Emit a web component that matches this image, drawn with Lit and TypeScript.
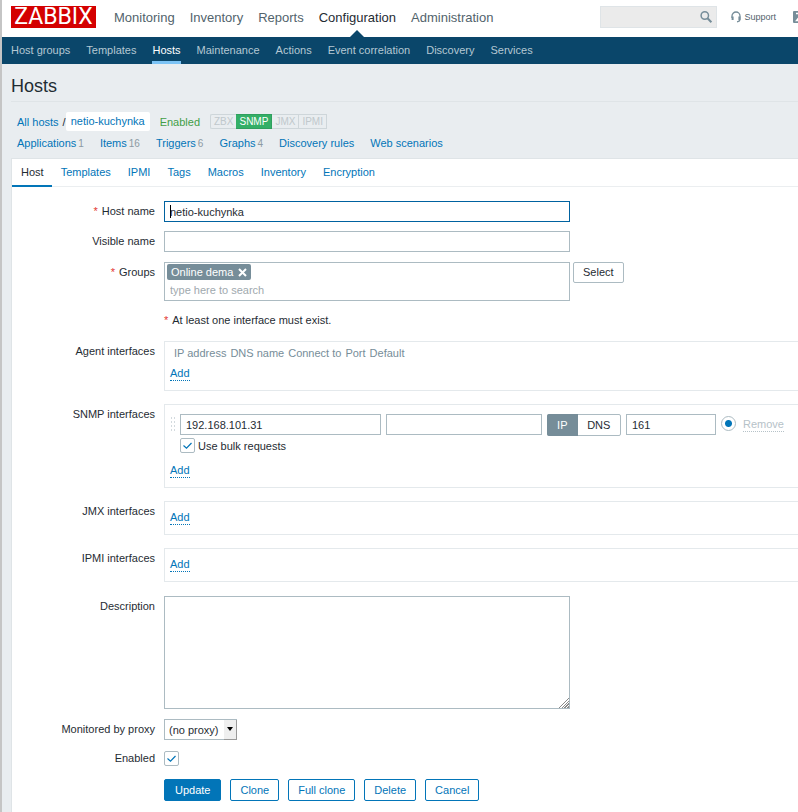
import { LitElement, html, css, svg } from "lit";
import { customElement, state } from "lit/decorators.js";

const MENU = ["Monitoring", "Inventory", "Reports", "Configuration", "Administration"];
const SUBMENU = ["Host groups", "Templates", "Hosts", "Maintenance", "Actions", "Event correlation", "Discovery", "Services"];
const TABS = ["Host", "Templates", "IPMI", "Tags", "Macros", "Inventory", "Encryption"];
const OBJECTS: [string, string][] = [
  ["Applications", "1"], ["Items", "16"], ["Triggers", "6"], ["Graphs", "4"], ["Discovery rules", ""], ["Web scenarios", ""],
];

@customElement("app-root")
export class AppRoot extends LitElement {
  @state() private tab = "Host";

  static styles = css`
    :host {
      display: flex;
      min-height: 100vh;
      overflow: hidden;
      background: #e9edf0;
      color: #1f2c33;
      font: 11px/14px "Liberation Sans", Arial, sans-serif;
    }
    * { box-sizing: border-box; }
    a { color: #0275b8; text-decoration: none; }
    ul { list-style: none; margin: 0; padding: 0; }
    input, select, textarea, button { font: inherit; color: inherit; margin: 0; }
    .edge { flex: 0 0 2px; background: #c5c5c5; }
    .page { flex: 1; min-width: 0; }

    .top { display: flex; align-items: center; height: 37px; padding-left: 9px; background: #fff; }
    .logo {
      width: 85px; height: 22px; background: #d40000; color: #fff; margin: 0 18px 3px 0;
      font: 23px/22px Roboto, sans-serif; text-align: center;
    }
    .menu { display: flex; gap: 15px; font-size: 13px; }
    .menu a { display: block; color: #52636c; position: relative; height: 37px; line-height: 35px; }
    .menu .on { color: #1f2c33; }
    .menu .on::after {
      content: ""; position: absolute; left: 50%; bottom: 0; margin-left: -7px;
      border: 7px solid transparent; border-top: 0; border-bottom-color: #0a466a;
    }
    .tools { display: flex; align-items: center; margin: 0 0 3px auto; font-size: 9px; }
    .tools a { display: flex; align-items: center; gap: 3px; color: #52636c; }
    .search { display: flex; position: relative; width: 117px; height: 22px; margin-right: 14px; }
    .search input { width: 100%; border: 1px solid #dfe4e7; background: #ebebeb; padding: 0 24px 0 5px; outline: 0; }
    .search button { position: absolute; right: 4px; top: 4px; width: 14px; height: 14px; border: 0; padding: 0; background: none; }
    .search svg, .tools svg { display: block; flex: none; }
    .tools .share { margin-left: 17px; width: 5px; overflow: hidden; }

    .sub { display: flex; gap: 16px; height: 27px; padding-left: 9px; background: #0a466a; }
    .sub a { color: #b5c8d3; line-height: 26px; border-bottom: 3px solid transparent; height: 27px; white-space: nowrap; }
    .sub .on { color: #fff; border-color: #7cc3f5; }

    h1 { margin: 0 0 0 9px; padding: 12px 0 4px; font-size: 18px; line-height: 21px; font-weight: normal; border-bottom: 1px solid #dfe4e7; }
    .crumbs { display: flex; align-items: center; height: 19px; margin: 10px 0 0 15px; }
    .crumbs .cur { background: #fff; border-radius: 2px; padding: 0 5px; line-height: 19px; }
    .slash { margin-left: 4px; }
    .enabled { color: #429e47; margin: 0 10px; }
    .badges { display: flex; font-size: 10px; line-height: 13px; color: #c0c8cc; }
    .badges li { border: 1px solid #ced6da; border-left: 0; padding: 0 3px; }
    .badges li:first-child { border-left: 1px solid #ced6da; border-right: 0; border-radius: 2px 0 0 2px; }
    .badges .ok { background: #34af67; border-color: #2f9f5e; color: #fff; }
    .objects { display: flex; gap: 16px; margin: 5px 0 7px 15px; }
    .objects small { font-size: 10px; color: #8c9aa3; margin-left: 2px; }

    .card { background: #fff; border: solid #dfe4e7; border-width: 1px 0 0 1px; margin-left: 9px; min-height: calc(100vh - 158px); }
    .tabs { display: flex; border-bottom: 1px solid #ebeef0; }
    .tabs button {
      border: 0; background: none; color: #0275b8; height: 28px; line-height: 26px; padding: 0 8px 0 9px;
      margin-bottom: -1px; border-bottom: 2px solid transparent;
    }
    .tabs .on { color: #1f2c33; border-color: #0275b8; }

    form { display: flex; flex-direction: column; gap: 9px; padding: 14px 0 11px; }
    .row { display: grid; grid-template-columns: 143px minmax(0, 1fr); column-gap: 9px; align-items: start; }
    .row > :nth-child(2) { grid-column: 2; }
    .label { text-align: right; line-height: 21px; }
    .req::before { content: "*"; color: #e33734; margin-right: 4px; }
    .field { border: 1px solid #acbbc2; background: #fff; height: 21px; padding: 0 5px; outline: 0; border-radius: 0; }
    .wide { width: 406px; max-width: 100%; }
    .focus { border-color: #0062a0; width: 100%; display: block; }
    .named { position: relative; }
    .caret { position: absolute; left: 6px; top: 4px; width: 1px; height: 13px; background: #000; }
    .pick { display: flex; gap: 3px; align-items: flex-start; }
    .multi { border: 1px solid #acbbc2; height: 39px; padding: 1px 2px; }
    .groups { padding-top: 1px; }
    .chip {
      display: inline-flex; align-items: center; gap: 5px; height: 16px; padding: 0 4px; background: #768d99;
      color: #fff; border-radius: 2px; vertical-align: top;
    }
    .chip button { border: 0; background: none; padding: 0; width: 9px; height: 9px; }
    .chip svg { display: block; }
    .multi input { display: block; width: 100%; border: 0; outline: 0; padding: 0 3px; height: 20px; background: none; }
    .multi input::placeholder { color: #a0a9ae; opacity: 1; }
    .btn { height: 22px; padding: 0 9px; border: 1px solid #0275b8; border-radius: 2px; background: #fff; color: #0275b8; line-height: 20px; }
    .btn.main { background: #0275b8; color: #fff; padding: 0 10px; }
    .btn.grey { border-color: #acbbc2; color: #1f2c33; height: 21px; line-height: 19px; }
    .note { margin: 0; line-height: 20px; }
    .boxed { margin: 2px 0; }
    .box { border: 1px solid #e4e9ec; border-right: 0; padding: 8px 0 8px 5px; }
    .add { display: inline-block; line-height: 14px; border-bottom: 1px dotted #0275b8; vertical-align: top; }
    table { border-spacing: 0; margin: -4px 0 6px 4px; color: #768d99; }
    th { font-weight: normal; padding: 0 4px 0 0; text-align: left; line-height: 14px; white-space: nowrap; }
    .agent { height: 50px; }
    .snmp { height: 84px; padding-top: 9px; }
    .iface { display: grid; grid-template-columns: 5px 201px 156px 74px 90px 15px auto; align-items: start; justify-content: start; column-gap: 5px; height: 22px; }
    .grip { width: 6px; height: 17px; margin-top: 2px; background: radial-gradient(circle, #d3dade 1px, transparent 1px) 0 0 / 3px 4px; }
    .seg { display: flex; height: 22px; border: 1px solid #acbbc2; border-radius: 2px; }
    .seg button { flex: 43; border: 0; padding: 0; background: none; }
    .seg .on { flex: 31; background: #768d99; color: #fff; margin: -1px 0 -1px -1px; border-radius: 2px 0 0 2px; }
    .remove { color: #b6c2c8; border: 0; border-bottom: 1px dotted #b6c2c8; background: none; padding: 0; height: 15px; margin: 3px 0 0 2px; }
    input[type="radio"] {
      appearance: none; width: 15px; height: 15px; margin-top: 2px; border: 1px solid #acbbc2; border-radius: 50%;
      background: radial-gradient(circle, #0275b8 3px, #fff 4px);
    }
    .tick { display: flex; align-items: center; gap: 3px; margin: 2px 0 10px 10px; height: 15px; }
    .check { display: inline-grid; position: relative; width: 15px; height: 15px; }
    .check input { appearance: none; width: 100%; height: 100%; border: 1px solid #acbbc2; border-radius: 2px; }
    .check svg { position: absolute; left: 0; top: 0; pointer-events: none; }
    .slim .box { height: 34px; }
    .desc { padding: 3px 0 1px; }
    textarea { display: block; border: 1px solid #acbbc2; height: 113px; padding: 3px 5px; resize: vertical; outline: 0; }
    textarea::-webkit-resizer {
      background:
        linear-gradient(135deg, #fff 50%, transparent 50%) right bottom / 11px 11px no-repeat,
        repeating-linear-gradient(135deg, #8a8a8a 0 1px, #fff 1px 2px) right bottom / 11px 11px no-repeat;
    }
    .drop { position: relative; width: 73px; }
    .drop select { appearance: none; width: 73px; padding: 0 14px 0 4px; display: block; }
    .drop span {
      position: absolute; right: 0; top: 1px; width: 13px; height: 20px; background: #efefef;
      border: solid #9a9a9a; border-width: 0 1px 1px 0; pointer-events: none;
    }
    .drop span::after { content: ""; position: absolute; left: 3px; top: 7px; border: 3px solid transparent; border-bottom: 0; border-top: 4px solid #000; }
    .state { padding: 2px 0; }
    .state .label { line-height: 15px; }
    .actions { display: flex; gap: 9px; margin: 2px 0 0 152px; }
  `;

  private tickMark() {
    return html`<svg width="15" height="15" viewBox="0 0 15 15">${svg`<path d="M3.5 7.5L6.5 10.2L11.5 5" fill="none" stroke="#0275b8" stroke-width="1.2"/>`}</svg>`;
  }

  private nav(items: string[], on: string) {
    return items.map((t) => html`<a href="#" class=${t === on ? "on" : ""}>${t}</a>`);
  }

  render() {
    return html`
      <div class="edge"></div>
      <div class="page">
        <header class="top">
          <a class="logo" href="#">ZABBIX</a>
          <nav class="menu">${this.nav(MENU, "Configuration")}</nav>
          <div class="tools">
            <div class="search">
              <input type="text" aria-label="Search" />
              <button aria-label="Search">
                <svg width="14" height="14" viewBox="0 0 14 14" fill="none" stroke="#768d99"><circle cx="5.8" cy="5.5" r="3.7" stroke-width="1.5"/><path d="M8.5 8.2L12.4 12.2" stroke-width="2"/></svg>
              </button>
            </div>
            <a href="#">
              <svg width="10" height="12" viewBox="0 0 10 12" fill="none" stroke="#768d99" stroke-width="1.3"><path d="M1 7V5a4 4 0 0 1 8 0v3q0 2.5-3 2.8"/><path d="M1.6 5.5v3.5M8.4 5.5v3.5" stroke-width="2"/></svg>
              Support</a>
            <a class="share" href="#" aria-label="Share">
              <svg width="12" height="12" viewBox="0 0 12 12"><rect width="12" height="12" rx="1" fill="#768d99"/><path d="M3 2.5h6L3.5 9.5H9" fill="none" stroke="#fff" stroke-width="1.4"/></svg>
            </a>
          </div>
        </header>
        <nav class="sub">${this.nav(SUBMENU, "Hosts")}</nav>

        <h1>Hosts</h1>
        <div class="crumbs">
          <a href="#">All hosts</a><span class="slash">/</span><a class="cur" href="#">netio-kuchynka</a>
          <span class="enabled">Enabled</span>
          <ul class="badges"><li>ZBX</li><li class="ok">SNMP</li><li>JMX</li><li>IPMI</li></ul>
        </div>
        <nav class="objects">
          ${OBJECTS.map(([t, n]) => html`<span><a href="#">${t}</a>${n ? html`<small>${n}</small>` : ""}</span>`)}
        </nav>

        <main class="card">
          <div class="tabs" role="tablist">
            ${TABS.map((t) => html`<button role="tab" class=${t === this.tab ? "on" : ""} @click=${() => (this.tab = t)}>${t}</button>`)}
          </div>
          <form @submit=${(e: Event) => e.preventDefault()}>
            <div class="row">
              <label class="label req" for="host">Host name</label>
              <div class="named wide"><input class="field focus" id="host" type="text" .value=${"netio-kuchynka"} /><span class="caret"></span></div>
            </div>
            <div class="row">
              <label class="label" for="visible">Visible name</label>
              <input class="field wide" id="visible" type="text" />
            </div>
            <div class="row groups">
              <label class="label req" for="groups">Groups</label>
              <div class="pick">
                <div class="multi wide">
                  <span class="chip">Online dema
                    <button type="button" aria-label="Remove group"><svg width="9" height="9" viewBox="0 0 9 9"><path d="M1 1L8 8M8 1L1 8" stroke="#fff" stroke-width="2"/></svg></button>
                  </span>
                  <input id="groups" type="text" placeholder="type here to search" />
                </div>
                <button type="button" class="btn grey">Select</button>
              </div>
            </div>
            <div class="row"><span></span><p class="note req">At least one interface must exist.</p></div>
            <div class="row boxed">
              <span class="label">Agent interfaces</span>
              <div class="box agent">
                <table><tr><th>IP address</th><th>DNS name</th><th>Connect to</th><th>Port</th><th>Default</th></tr></table>
                <a class="add" href="#">Add</a>
              </div>
            </div>
            <div class="row boxed">
              <span class="label">SNMP interfaces</span>
              <div class="box snmp">
                <div class="iface">
                  <span class="grip"></span>
                  <input class="field" type="text" aria-label="IP address" .value=${"192.168.101.31"} />
                  <input class="field" type="text" aria-label="DNS name" />
                  <div class="seg"><button type="button" class="on">IP</button><button type="button">DNS</button></div>
                  <input class="field" type="text" aria-label="Port" .value=${"161"} />
                  <input type="radio" name="main" aria-label="Default" checked />
                  <button type="button" class="remove" disabled>Remove</button>
                </div>
                <div class="tick">
                  <span class="check"><input id="bulk" type="checkbox" checked />${this.tickMark()}</span>
                  <label for="bulk">Use bulk requests</label>
                </div>
                <a class="add" href="#">Add</a>
              </div>
            </div>
            ${["JMX interfaces", "IPMI interfaces"].map((t) => html`
              <div class="row boxed slim">
                <span class="label">${t}</span>
                <div class="box"><a class="add" href="#">Add</a></div>
              </div>`)}
            <div class="row desc">
              <label class="label" for="desc">Description</label>
              <textarea class="wide" id="desc"></textarea>
            </div>
            <div class="row">
              <label class="label" for="proxy">Monitored by proxy</label>
              <div class="drop"><select class="field" id="proxy"><option>(no proxy)</option></select><span></span></div>
            </div>
            <div class="row state">
              <label class="label" for="enabled">Enabled</label>
              <span class="check"><input id="enabled" type="checkbox" checked />${this.tickMark()}</span>
            </div>
            <div class="actions">
              <button class="btn main">Update</button>
              ${["Clone", "Full clone", "Delete", "Cancel"].map((t) => html`<button type="button" class="btn">${t}</button>`)}
            </div>
          </form>
        </main>
      </div>
    `;
  }
}
